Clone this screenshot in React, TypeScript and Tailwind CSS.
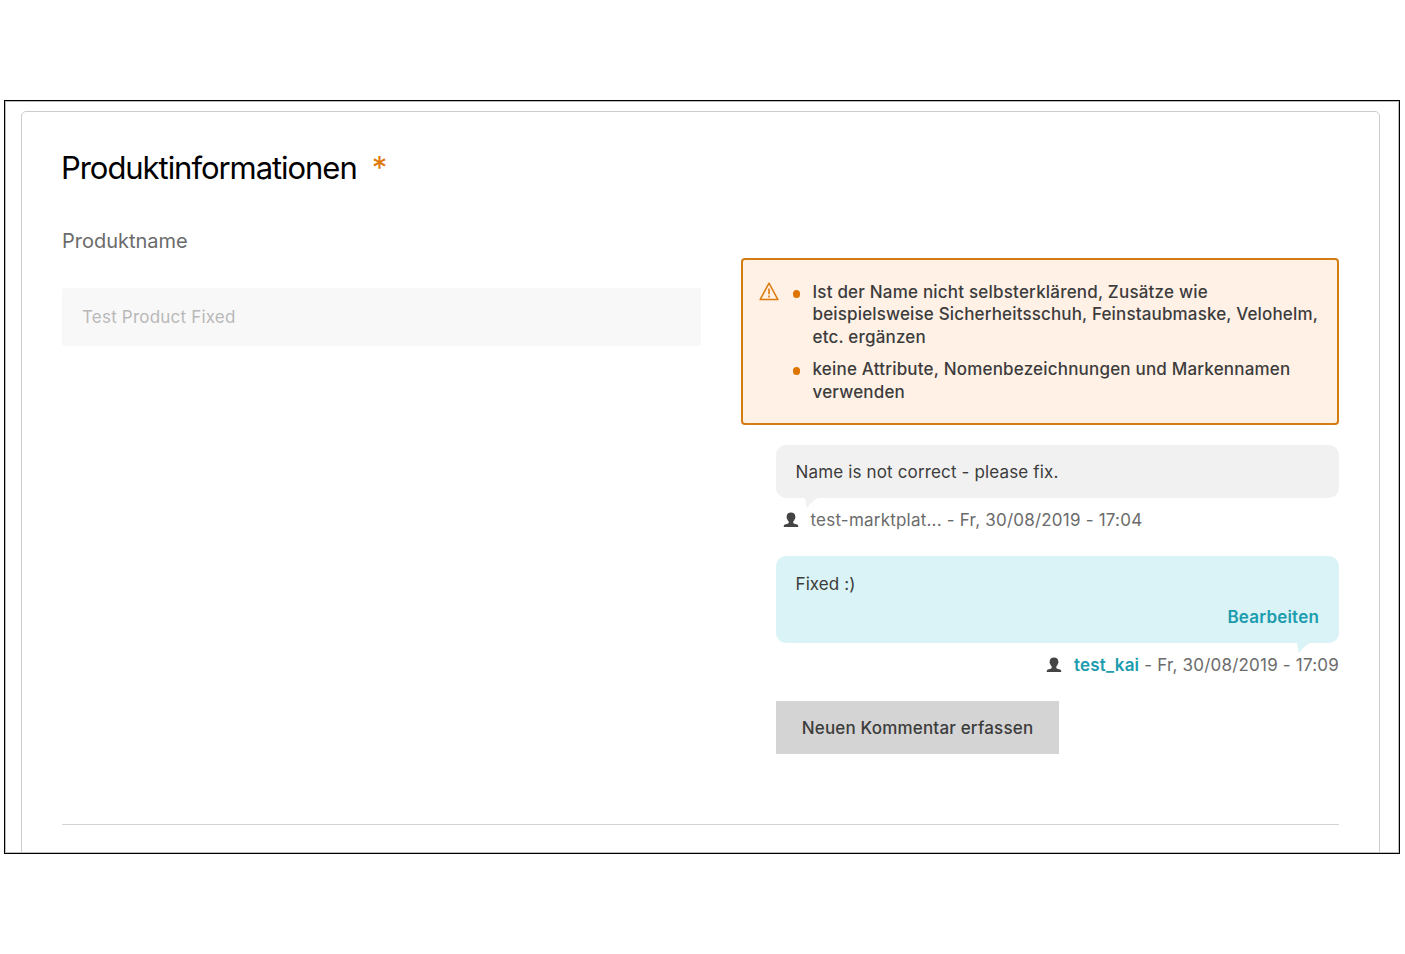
import type { ReactNode } from "react";

function WarningIcon() {
  return (
    <svg className="mt-px h-[19px] w-5 shrink-0" viewBox="0 0 20 19" fill="none" stroke="#de7a0b">
      <path d="M10 1.2 18.9 17.6H1.1Z" strokeWidth="1.5" strokeLinejoin="round" />
      <path d="M10 6.500v5.700M10 13.600v1.800" strokeWidth="1.6" />
    </svg>
  );
}

function UserIcon() {
  return (
    <svg className="h-4 w-4 shrink-0" viewBox="0 0 16 16" fill="#444">
      <path d="M8 .6C10.700.6 12.300 2 12.300 4.500c0 .5.2.7.1 1.300-.1.700-.5.900-.7 1.500-.3.900-.8 1.600-1.400 2.100v1.500c.5.700 2.800 1.100 3.800 1.700.8.400 1.100 1 1.200 2.400H.7c.1-1.400.4-2 1.200-2.400 1-.6 3.300-1 3.800-1.700V9.400c-.6-.5-1.100-1.200-1.400-2.100-.2-.6-.6-.8-.7-1.500-.1-.6.1-.8.1-1.300C3.700 2 5.300.6 8 .6Z" />
    </svg>
  );
}

function Tail({ className }: { className: string }) {
  return (
    <svg className={"absolute top-full h-[10px] w-[13px] " + className} viewBox="0 0 13 10">
      <path d="M0 0H13C10 1.500 6 4.500 2.500 9.500Q1.500 10 1.500 8.500Z" fill="currentColor" />
    </svg>
  );
}

function Hint({ children }: { children: ReactNode }) {
  return (
    <li className="flex">
      <span className="mt-[9px] mr-[12.5px] h-2 w-[7px] shrink-0 rounded-full bg-[#de7500]" />
      <span>{children}</span>
    </li>
  );
}

export default function App() {
  return (
    <div className="h-[954px] w-[1405px] overflow-hidden bg-white pt-[100px] pl-1 font-['Inter',sans-serif] text-[17px] text-[#3c3c3c]">
      <main className="h-[754px] w-[1396px] border border-black">
        <div className="h-full overflow-hidden border border-[#bdbdbd] pt-[9px] pl-[15px]">
          <section className="h-[800px] w-[1359px] rounded-[5px] border border-[#ccc] px-10 pt-[36px]">
            <h1 className="-ml-px flex h-10 items-center pb-px text-[31px] leading-10 tracking-[-1.05px] text-black">
              <span>Produktinformationen</span>
              <span className="ml-[15px] text-[#de7a0b]">*</span>
            </h1>
            <div className="mt-[38px] flex h-[586px] justify-between">
              <div className="w-[639px]">
                <label className="block h-[30px] text-[20px] leading-[30px] text-[#6b6b6b]">Produktname</label>
                <div className="mt-8 flex h-[58px] items-center rounded-[3px] bg-[#f8f8f8] pt-px pl-5 tracking-[0.2px] text-[#b8b8b8]">
                  Test Product Fixed
                </div>
              </div>
              <div className="w-[598px] pt-8">
                <div className="flex h-[167px] rounded-[4px] border-2 border-[#d47b12] bg-[#fff1e6] pt-[21px] pl-4 font-medium">
                  <WarningIcon />
                  <ul className="ml-[14px] space-y-[10px] leading-[22.4px] tracking-[0.18px]">
                    <Hint>
                      <span className="tracking-[0.2px]">Ist der Name nicht selbsterklärend, Zusätze wie</span>
                      <br />
                      <span className="tracking-[0.15px]">beispielsweise Sicherheitsschuh, Feinstaubmaske, Velohelm,</span>
                      <br />
                      etc. ergänzen
                    </Hint>
                    <Hint>
                      <span className="tracking-[0.195px]">keine Attribute, Nomenbezeichnungen und Markennamen</span>
                      <br />
                      verwenden
                    </Hint>
                  </ul>
                </div>
                <div className="mt-5 ml-[35px] tracking-[0.2px]">
                  <div className="relative flex h-[53px] items-center rounded-[10px] bg-[#f1f1f1] pt-0.5 pl-[19.5px] tracking-[0.15px]">
                    Name is not correct - please fix.
                    <Tail className="left-[29px] text-[#f1f1f1]" />
                  </div>
                  <div className="mt-[10px] flex h-6 items-center pl-[7px] text-[#6b6b6b]">
                    <UserIcon />
                    <span className="ml-[11.5px] pt-0.5 tracking-[0.215px]">test-marktplat... - Fr, 30/08/2019 - 17:04</span>
                  </div>
                  <div className="relative mt-6 flex h-[87px] flex-col rounded-[10px] bg-[#d9f3f7] px-5 pt-4">
                    <span className="-ml-[0.5px] leading-6 tracking-[0.1px]">Fixed :)</span>
                    <button className="mt-[9px] self-end leading-6 font-semibold text-[#1c9cae]">Bearbeiten</button>
                    <Tail className="right-[29px] text-[#d9f3f7]" />
                  </div>
                  <div className="mt-[10px] flex h-6 items-center justify-end text-[#6b6b6b]">
                    <UserIcon />
                    <b className="ml-3 pt-0.5 font-semibold text-[#1c9cae]">test_kai</b>
                    <span className="ml-[5px] pt-0.5">- Fr, 30/08/2019 - 17:09</span>
                  </div>
                  <button className="mt-6 h-[53px] w-[283px] bg-[#d4d4d4] pt-0.5 font-medium tracking-[0.18px]">
                    Neuen Kommentar erfassen
                  </button>
                </div>
              </div>
            </div>
            <hr className="mt-[12px] border-[#d3d3d3]" />
          </section>
        </div>
      </main>
    </div>
  );
}
